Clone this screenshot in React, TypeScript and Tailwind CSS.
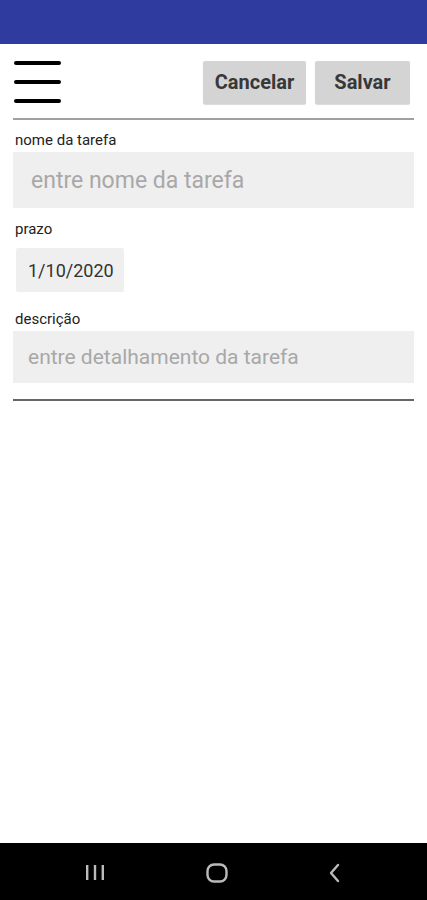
import React from "react";

export default function App() {
  return (
    <div className="w-[427px] h-[900px] flex flex-col bg-white" style={{ fontFamily: "Roboto, 'Noto Sans', sans-serif" }}>
      <div className="h-[44px] bg-[#2f3b9f]" />
      <div className="flex-1 flex flex-col px-[13px]">
        <div className="flex items-center justify-between h-[74px] pt-[2px]">
          <div className="flex flex-col gap-[15px] pl-[1px]">
            <div className="w-[47px] h-[4px] rounded-full bg-black" />
            <div className="w-[47px] h-[4px] rounded-full bg-black" />
            <div className="w-[47px] h-[4px] rounded-full bg-black" />
          </div>
          <div className="flex gap-[9px] pr-[4px]">
            <button className="w-[103px] h-[43px] bg-[#d4d4d4] rounded-[2px] text-[20px] font-bold text-[#383838] shadow-[0_1px_1px_rgba(0,0,0,0.15)]">Cancelar</button>
            <button className="w-[95px] h-[43px] bg-[#d4d4d4] rounded-[2px] text-[20px] font-bold text-[#383838] shadow-[0_1px_1px_rgba(0,0,0,0.15)]">Salvar</button>
          </div>
        </div>
        <div className="h-[2px] bg-[#a0a0a0]" />
        <div className="mt-[12px] h-[17px] flex items-center text-[15px] text-[#222] pl-[2px]">nome da tarefa</div>
        <div className="mt-[3px] h-[56px] bg-[#efefef] flex items-center pl-[18px] pt-[2px] text-[23px] text-[#a8a8a8]">entre nome da tarefa</div>
        <div className="mt-[13px] h-[17px] flex items-center text-[15px] text-[#222] pl-[2px]">prazo</div>
        <div className="mt-[10px] ml-[3px] w-[108px] h-[44px] bg-[#efefef] rounded-[2px] flex items-center pl-[12px] text-[18px] text-[#333]">1/10/2020</div>
        <div className="mt-[19px] h-[17px] flex items-center text-[15px] text-[#222] pl-[2px]">descrição</div>
        <div className="mt-[3px] h-[52px] bg-[#efefef] flex items-center pl-[15px] pt-[2px] text-[21px] text-[#a8a8a8]">entre detalhamento da tarefa</div>
        <div className="mt-[16px] h-[2px] bg-[#666]" />
      </div>
      <div className="h-[57px] bg-black flex items-center justify-between px-[84px] pt-[2px]">
        <svg width="22" height="18" viewBox="0 0 22 18">
          <rect x="2" y="1" width="2.4" height="15" fill="#bbb" />
          <rect x="9.8" y="1" width="2.4" height="15" fill="#bbb" />
          <rect x="17.6" y="1" width="2.4" height="15" fill="#bbb" />
        </svg>
        <svg width="24" height="20" viewBox="0 0 24 20">
          <rect x="2.5" y="1.5" width="19" height="17" rx="6.5" fill="none" stroke="#bbb" strokeWidth="2.4" />
        </svg>
        <svg width="16" height="20" viewBox="0 0 16 20">
          <path d="M11 2 L4 10 L11 18" fill="none" stroke="#bbb" strokeWidth="2.4" strokeLinecap="round" strokeLinejoin="round" />
        </svg>
      </div>
    </div>
  );
}
